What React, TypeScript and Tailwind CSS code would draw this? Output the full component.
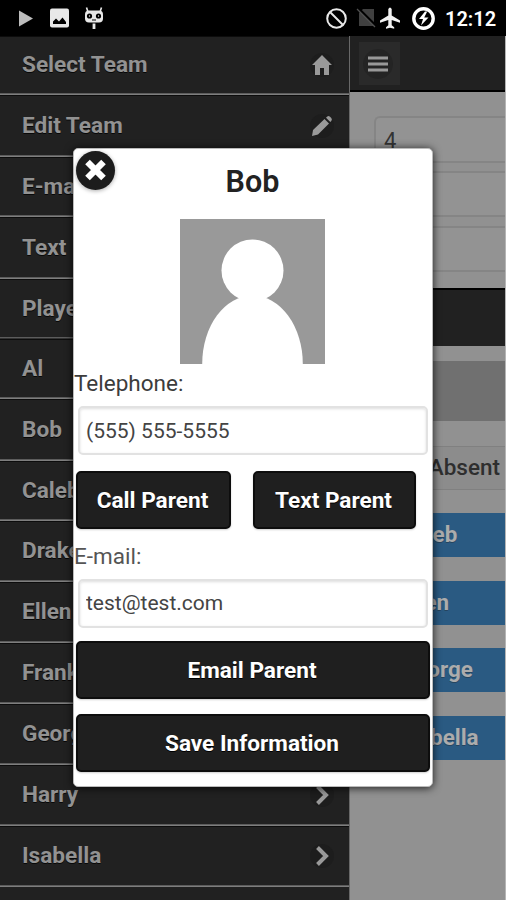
import type { ReactNode } from 'react';

import clsx from 'clsx';

type MenuIcon = 'home' | 'edit' | 'arrow' | 'none';

type MenuEntry = {
  label: string;
  icon: MenuIcon;
  height: string;
  divider?: boolean;
};

const menu: MenuEntry[] = [
  { label: 'Select Team', icon: 'home', height: 'h-[59px]' },
  { label: 'Edit Team', icon: 'edit', height: 'h-[62px]' },
  { label: 'E-mail', icon: 'arrow', height: 'h-[60px]' },
  { label: 'Text', icon: 'arrow', height: 'h-[62px]' },
  { label: 'Players', icon: 'none', height: 'h-[60px]', divider: true },
  { label: 'Al', icon: 'arrow', height: 'h-[60px]' },
  { label: 'Bob', icon: 'arrow', height: 'h-[62px]' },
  { label: 'Caleb', icon: 'arrow', height: 'h-[60px]' },
  { label: 'Drake', icon: 'arrow', height: 'h-[61px]' },
  { label: 'Ellen', icon: 'arrow', height: 'h-[61px]' },
  { label: 'Frank', icon: 'arrow', height: 'h-[61px]' },
  { label: 'George', icon: 'arrow', height: 'h-[61px]' },
  { label: 'Harry', icon: 'arrow', height: 'h-[61px]' },
  { label: 'Isabella', icon: 'arrow', height: 'h-[61px]' },
];

const absentees = ['Caleb', 'Ellen', 'George', 'Isabella'];

const MenuGlyph = ({ icon }: { icon: MenuIcon }) => {
  switch (icon) {
    case 'home':
      return (
        <svg className="size-6" viewBox="0 0 24 24" fill="#999">
          <path d="M12 2 2 12h3v10h5v-7h4v7h5V12h3z" />
        </svg>
      );
    case 'edit':
      return (
        <svg className="size-6" viewBox="0 0 24 24" fill="#999">
          <path d="M2 22l1-6L14.500 5 19 9.500 8 20.500zM16 3.700l1-1q1.500-1.200 3 0l1.300 1.300q1.200 1.500 0 3l-1 1z" />
        </svg>
      );
    case 'arrow':
      return (
        <svg className="size-6" viewBox="0 0 24 24" fill="none">
          <path d="M7.500 3.500l8.500 8.500-8.500 8.500" stroke="#999" strokeWidth="4" />
        </svg>
      );
    default:
      return null;
  }
};

const StatusBar = () => (
  <header className="flex h-9 shrink-0 items-center justify-between bg-black pl-[17px] pr-[11px]">
    <div className="flex items-center">
      <svg className="h-[18px] w-4" viewBox="0 0 16 18" fill="#bdbdbd">
        <path d="M2 1.500v16l14-8z" />
      </svg>
      <svg className="ml-4 h-5 w-[21px]" viewBox="0 0 21 20">
        <rect x="1" y="0.500" width="19" height="19" rx="2" fill="#e8e8e8" />
        <path d="M4 16v-2.500l3-3 3 3 3.500-4 3.500 4.500v2z" fill="#000" />
      </svg>
      <svg className="ml-3.5 h-6 w-5" viewBox="0 0 20 24">
        <path d="M4 6L2.500 1.500M16 6l1.500-4.500" stroke="#e8e8e8" strokeWidth="1.600" />
        <rect x="1" y="4.500" width="18" height="12" rx="4" fill="#e8e8e8" />
        <circle cx="5.500" cy="10" r="2.600" fill="#000" />
        <circle cx="14.500" cy="10" r="2.600" fill="#000" />
        <circle cx="5.500" cy="10" r="0.700" fill="#e8e8e8" />
        <circle cx="14.500" cy="10" r="0.700" fill="#e8e8e8" />
        <path d="M8 14h4" stroke="#000" />
        <path d="M10 17.500v5.500" stroke="#e8e8e8" strokeWidth="2.800" />
      </svg>
    </div>
    <div className="flex items-center text-white">
      <svg className="size-[21px]" viewBox="0 0 21 21" fill="none" stroke="#e8e8e8" strokeWidth="2">
        <circle cx="10.500" cy="10.500" r="9.300" />
        <path d="M4 4l13 13" />
      </svg>
      <svg className="ml-[9px] h-5 w-[21px]" viewBox="0 0 21 20">
        <path d="M7 1h11v17H3V5z" fill="#404040" />
        <path d="M2 0l18 18" stroke="#000" strokeWidth="2.500" />
        <path d="M1 1l18 18" stroke="#505050" strokeWidth="1.300" />
      </svg>
      <svg className="ml-[3px] h-[22px] w-5" viewBox="0 0 20 22" fill="#f2f2f2">
        <path d="M8.300 2q1.700-3 3.400 0v6.500l8.300 5v2.200l-8.300-2.700v5.300l2.500 2v1.500L10 20.800l-4 1v-1.500l2.300-2v-5.300L0 15.700v-2.200l8.300-5z" />
      </svg>
      <svg className="ml-3 size-[23px]" viewBox="0 0 23 23">
        <circle cx="11.500" cy="11.500" r="9.700" fill="none" stroke="#fff" strokeWidth="3.400" />
        <path d="M13 4.500l-6 7.500h4l-2 6.500 7.500-8h-4.300l3-6z" fill="#fff" />
      </svg>
      <span className="ml-2.5 w-[50px] whitespace-nowrap pt-px text-[20px] font-semibold leading-none">
        12:12
      </span>
    </div>
  </header>
);

const SideMenu = () => (
  <nav className="w-[350px] shrink-0 border-r border-[#686868] bg-[#212121]">
    {menu.map((entry) => (
      <div
        key={entry.label}
        className={clsx(
          'flex items-center justify-between border-b border-t border-t-[#0c0c0c] pb-px pl-[22px] pr-[15px] text-[22.600px] font-bold text-[#929292] shadow-[inset_0_-1px_0_#5c5c5c]',
          entry.height,
          entry.divider ? 'border-b-[#333]' : 'border-b-[#7e7e7e]'
        )}
      >
        <span className="[text-shadow:0_1px_0_#080808]">{entry.label}</span>
        <span className="rounded-full bg-[#1d1d1d]">
          <MenuGlyph icon={entry.icon} />
        </span>
      </div>
    ))}
  </nav>
);

const TeamPage = () => (
  <main className="flex min-w-0 flex-1 flex-col border-r border-[#b5b5b5] bg-[#919191]">
    <div className="flex h-14 shrink-0 items-center border-b-2 border-black bg-[#212121] pl-[9px]">
      <button className="flex h-[43px] w-[41px] items-center justify-center bg-[#2a2a2a] pr-[3px] pt-px">
        <svg className="size-[30px] rounded-full bg-[#242424]" viewBox="0 0 30 30" stroke="#999" strokeWidth="3">
          <path d="M5 9h20M5 15h20M5 21h20" />
        </svg>
      </button>
    </div>
    <div className="ml-6 mt-6 h-[47px] rounded-l-md border-2 border-r-0 border-[#858585] bg-[#939393] pl-2 pt-1 text-[22px] leading-[38px] text-[#333]">
      4
    </div>
    <div className="ml-6 mt-2 h-[46px] rounded-l-md border-2 border-r-0 border-[#858585] bg-[#939393]" />
    <div className="ml-6 mt-[9px] h-[46px] rounded-l-md border-2 border-r-0 border-[#858585] bg-[#939393]" />
    <div className="mt-4 h-[58px] border-t-2 border-black bg-[#212121]" />
    <div className="mt-[15px] h-[60px] bg-[#707070]" />
    <div className="mt-[25px] flex h-11 items-center justify-end border-y border-[#808080] bg-[#8c8c8c] pr-[5px] text-[22.500px] font-medium text-[#2e2e2e]">
      Absent
    </div>
    <div className="mt-[23px] flex flex-col gap-[23.500px]">
      {absentees.map((name) => (
        <div
          key={name}
          className="flex h-11 items-center bg-[#2a5a82] pl-[50px] text-[22.400px] font-bold text-[#acacac] [text-shadow:0_1px_0_#26455f]"
        >
          {name}
        </div>
      ))}
    </div>
  </main>
);

const DialogButton = ({ className, children }: { className?: string; children: ReactNode }) => (
  <button
    className={clsx(
      'flex h-[58px] items-center justify-center rounded-[5px] border-2 border-[#0d0d0d] bg-[#1f1f1f] pr-0.5 pt-0.5 text-[22.600px] font-bold text-white shadow-[0_1px_2px_#0003] [text-shadow:0_1px_0_#000]',
      className
    )}
  >
    {children}
  </button>
);

const DialogInput = ({ value, className }: { value: string; className?: string }) => (
  <input
    className={clsx(
      'ml-1 block h-[49px] w-[350px] rounded-[5px] border-2 border-[#e2e2e2] bg-white px-1.5 text-[21px] text-[#444] shadow-[inset_0_1px_3px_#0002] outline-none',
      className
    )}
    defaultValue={value}
  />
);

const PlayerDialog = () => (
  <section className="absolute left-[73px] top-[148px] h-[639px] w-[360px] rounded-[5px] border border-[#bbb] bg-white shadow-[0_1px_9px_#000c]">
    <button className="absolute left-[2px] top-[2px] size-[39px] rounded-full bg-[#1c1c1c] shadow-[0_1px_4px_#0005]">
      <svg className="size-[39px]" viewBox="0 0 39 39" stroke="#fff" strokeWidth="6.500">
        <path d="M11.500 11l16 16M27.500 11l-16 16" />
      </svg>
    </button>
    <h1 className="h-[70px] pr-px pt-[15px] text-center text-[30.500px] font-semibold leading-9 text-[#222]">
      Bob
    </h1>
    <svg className="ml-[106px] size-[145px]" viewBox="0 0 145 145">
      <rect width="145" height="145" fill="#999" />
      <circle cx="72.500" cy="51.500" r="31" fill="#fff" />
      <ellipse cx="72.500" cy="145" rx="50.300" ry="68.500" fill="#fff" />
    </svg>
    <label className="flex h-[42px] items-center pb-[3px] text-[22.500px] text-[#3c3c3c]">
      Telephone:
    </label>
    <DialogInput value="(555) 555-5555" />
    <div className="ml-[2px] mt-4 flex gap-[22px]">
      <DialogButton className="w-[155px]">Call Parent</DialogButton>
      <DialogButton className="w-[163px]">Text Parent</DialogButton>
    </div>
    <label className="flex h-[50px] items-center pt-1.5 text-[22.500px] text-[#555]">E-mail:</label>
    <DialogInput value="test@test.com" className="pb-0.5" />
    <DialogButton className="ml-[2px] mt-[13px] w-[354px]">Email Parent</DialogButton>
    <DialogButton className="ml-[2px] mt-[15px] w-[354px]">Save Information</DialogButton>
  </section>
);

const App = () => (
  <div className="relative flex h-[900px] w-[506px] flex-col overflow-hidden bg-[#212121] font-[Roboto,'Liberation_Sans',sans-serif]">
    <StatusBar />
    <div className="flex min-h-0 flex-1">
      <SideMenu />
      <TeamPage />
    </div>
    <PlayerDialog />
  </div>
);

export default App;
